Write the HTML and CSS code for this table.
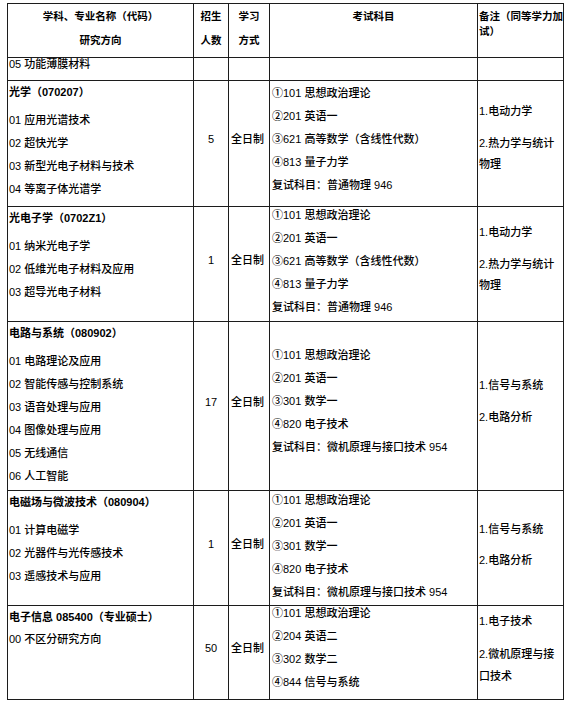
FILE: index.html
```html
<!DOCTYPE html>
<html lang="zh-CN">
<head>
<meta charset="utf-8">
<title>招生专业目录</title>
<link rel="stylesheet" href="styles.css">
</head>
<body>
<table class="plan">
  <colgroup>
    <col class="c-major"><col class="c-num"><col class="c-mode"><col class="c-exam"><col class="c-note">
  </colgroup>
  <thead>
    <tr class="r-head">
      <th class="h-two"><div>学科、专业名称（代码）</div><div>研究方向</div></th>
      <th class="h-two"><div>招生</div><div>人数</div></th>
      <th class="h-two"><div>学习</div><div>方式</div></th>
      <th class="h-exam">考试科目</th>
      <th class="h-note"><div class="nowrap">备注（同等学力加</div><div>试）</div></th>
    </tr>
  </thead>
  <tbody>
    <tr class="r-prev">
      <td class="major"><div class="prev">05 功能薄膜材料</div></td>
      <td></td><td></td><td></td><td></td>
    </tr>
    <tr class="r-optics">
      <td class="major">
        <div class="title">光学（070207）</div>
        <div class="item">01 应用光谱技术</div>
        <div class="item">02 超快光学</div>
        <div class="item">03 新型光电子材料与技术</div>
        <div class="item">04 等离子体光谱学</div>
      </td>
      <td class="num">5</td>
      <td class="mode">全日制</td>
      <td class="exam pt-1">
        <div class="line">①101 思想政治理论</div>
        <div class="line">②201 英语一</div>
        <div class="line">③621 高等数学（含线性代数）</div>
        <div class="line">④813 量子力学</div>
        <div class="line">复试科目：普通物理 946</div>
      </td>
      <td class="note pt-20">
        <p>1.电动力学</p>
        <p>2.热力学与统计物理</p>
      </td>
    </tr>
    <tr class="r-opto">
      <td class="major">
        <div class="title">光电子学（0702Z1）</div>
        <div class="item">01 纳米光电子学</div>
        <div class="item">02 低维光电子材料及应用</div>
        <div class="item">03 超导光电子材料</div>
      </td>
      <td class="num">1</td>
      <td class="mode">全日制</td>
      <td class="exam">
        <div class="shift-3">
          <div class="line">①101 思想政治理论</div>
          <div class="line">②201 英语一</div>
          <div class="line">③621 高等数学（含线性代数）</div>
          <div class="line">④813 量子力学</div>
          <div class="line">复试科目：普通物理 946</div>
        </div>
      </td>
      <td class="note pt-15">
        <p>1.电动力学</p>
        <p>2.热力学与统计物理</p>
      </td>
    </tr>
    <tr class="r-circuit">
      <td class="major">
        <div class="title">电路与系统（080902）</div>
        <div class="item">01 电路理论及应用</div>
        <div class="item">02 智能传感与控制系统</div>
        <div class="item">03 语音处理与应用</div>
        <div class="item">04 图像处理与应用</div>
        <div class="item">05 无线通信</div>
        <div class="item">06 人工智能</div>
      </td>
      <td class="num">17</td>
      <td class="mode">全日制</td>
      <td class="exam pt-22">
        <div class="line">①101 思想政治理论</div>
        <div class="line">②201 英语一</div>
        <div class="line">③301 数学一</div>
        <div class="line">④820 电子技术</div>
        <div class="line">复试科目：微机原理与接口技术 954</div>
      </td>
      <td class="note pt-53">
        <p>1.信号与系统</p>
        <p>2.电路分析</p>
      </td>
    </tr>
    <tr class="r-field">
      <td class="major">
        <div class="title">电磁场与微波技术（080904）</div>
        <div class="item">01 计算电磁学</div>
        <div class="item">02 光器件与光传感技术</div>
        <div class="item">03 遥感技术与应用</div>
      </td>
      <td class="num">1</td>
      <td class="mode">全日制</td>
      <td class="exam">
        <div class="shift-2">
          <div class="line">①101 思想政治理论</div>
          <div class="line">②201 英语一</div>
          <div class="line">③301 数学一</div>
          <div class="line">④820 电子技术</div>
          <div class="line">复试科目：微机原理与接口技术 954</div>
        </div>
      </td>
      <td class="note pt-28 gap-10">
        <p>1.信号与系统</p>
        <p>2.电路分析</p>
      </td>
    </tr>
    <tr class="r-info">
      <td class="major">
        <div class="title title-flat">电子信息 085400（专业硕士）</div>
        <div class="item">00 不区分研究方向</div>
      </td>
      <td class="num">50</td>
      <td class="mode">全日制</td>
      <td class="exam">
        <div class="shift-4">
          <div class="line">①101 思想政治理论</div>
          <div class="line">②204 英语二</div>
          <div class="line">③302 数学二</div>
          <div class="line">④844 信号与系统</div>
        </div>
      </td>
      <td class="note pt-4 note-wide">
        <p>1.电子技术</p>
        <p>2.微机原理与接口技术</p>
      </td>
    </tr>
  </tbody>
</table>
</body>
</html>
```

FILE: styles.css
```css
* { box-sizing: border-box; }

html, body {
  margin: 0;
  background: #fff;
}

body {
  padding: 3px 0 0 7px;
  font-family: "Liberation Sans", "Noto Sans CJK SC", sans-serif;
  font-size: 11px;
  font-weight: 500;
  color: #000;
}

.plan {
  border-collapse: collapse;
  table-layout: fixed;
  width: 557px;
}

.c-major { width: 186px; }
.c-num { width: 35px; }
.c-mode { width: 41px; }
.c-exam { width: 208px; }
.c-note { width: 86px; }

.plan th,
.plan td {
  border: 1px solid #1c1c1c;
  padding: 0 1px;
  vertical-align: top;
  overflow: hidden;
}

/* header */
.r-head { height: 54px; }
.plan th {
  font-size: 10.5px;
  font-weight: 700;
}
.h-two {
  text-align: center;
  line-height: 24px;
}
.h-exam {
  text-align: center;
  line-height: 24px;
  padding-top: 9px;
}
.plan .h-note {
  text-align: left;
  line-height: 15px;
  padding: 5px 0 0 1px;
  overflow: visible;
}
.nowrap { white-space: nowrap; }

/* rows */
.r-prev { height: 23px; }
.r-optics { height: 126px; }
.r-opto { height: 115px; }
.r-circuit { height: 169px; }
.r-field { height: 115px; }
.r-info { height: 94px; }

.prev { line-height: 13px; }

.title {
  font-weight: 700;
  line-height: 23px;
  margin-bottom: 5px;
}
.title-flat { margin-bottom: 0; line-height: 22px; }
.item { line-height: 23px; }

.num,
.mode {
  vertical-align: middle !important;
  line-height: 23px;
  padding-bottom: 8px !important;
}
.num { text-align: center; }
.mode { padding-left: 2px !important; }

.exam { padding-left: 2px !important; }
.line { line-height: 23px; white-space: nowrap; }
.shift-2 { margin-top: -2px; }
.shift-3 { margin-top: -3px; }
.shift-4 { margin-top: -4px; }

.pt-1 { padding-top: 1px !important; }
.pt-4 { padding-top: 4px !important; }
.pt-15 { padding-top: 15px !important; }
.pt-20 { padding-top: 20px !important; }
.pt-22 { padding-top: 22px !important; }
.pt-28 { padding-top: 28px !important; }
.pt-53 { padding-top: 53px !important; }

.note { padding-right: 2px !important; }
.note p {
  margin: 0 0 11px;
  line-height: 21px;
}
.gap-10 p { margin-bottom: 10px; }
.note-wide p { line-height: 22px; }
```
